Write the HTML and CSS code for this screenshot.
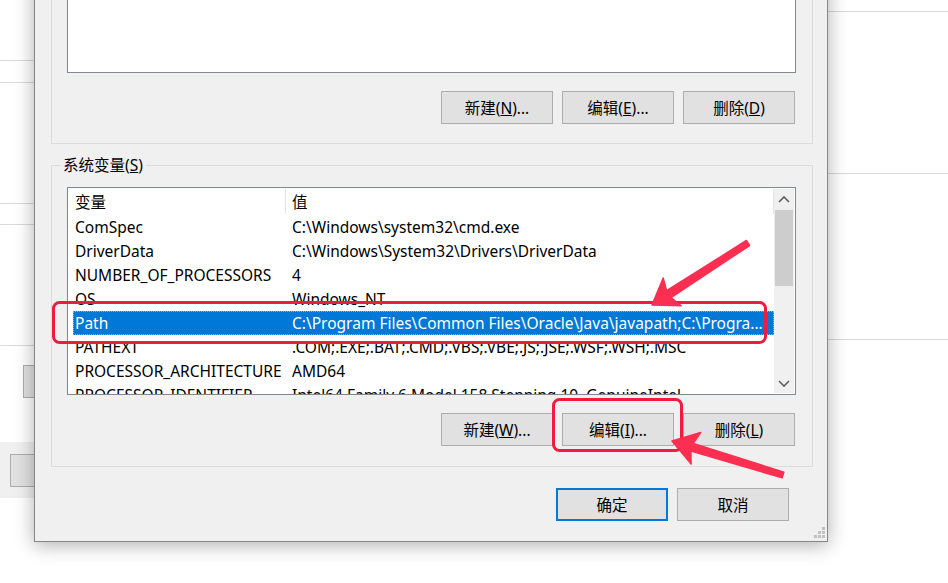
FILE: index.html
```html
<!DOCTYPE html>
<html lang="zh-CN">
<head>
  <meta charset="UTF-8">
  <meta name="viewport" content="width=device-width, initial-scale=1.0">
  <title>环境变量</title>
  <link rel="stylesheet" href="styles.css">
</head>
<body>
  <!-- 背后的窗口 -->
  <div class="bg-left">
    <div class="sep s1"></div>
    <div class="sep s2"></div>
    <div class="sep s3"></div>
    <div class="sep s4"></div>
    <div class="sep s5"></div>
    <div class="bg-btn b1"></div>
    <div class="bg-panel">
      <div class="bg-btn b2"></div>
    </div>
  </div>
  <div class="bg-right">
    <div class="sep r1"></div>
    <div class="sep r2"></div>
    <div class="sep r3"></div>
  </div>

  <!-- 环境变量对话框 -->
  <div class="dialog">
    <div class="group group-user">
      <div class="listbox listbox-user"></div>
      <div class="btn-row">
        <button class="btn">新建(<u>N</u>)...</button>
        <button class="btn">编辑(<u>E</u>)...</button>
        <button class="btn">删除(<u>D</u>)</button>
      </div>
    </div>

    <div class="group group-sys">
      <div class="group-title">系统变量(<u>S</u>)</div>
      <div class="listbox listbox-sys">
        <div class="table">
          <div class="row head">
            <div class="cell name">变量</div>
            <div class="cell value">值</div>
          </div>
          <div class="row"><div class="cell name">ComSpec</div><div class="cell value">C:\Windows\system32\cmd.exe</div></div>
          <div class="row"><div class="cell name">DriverData</div><div class="cell value">C:\Windows\System32\Drivers\DriverData</div></div>
          <div class="row"><div class="cell name">NUMBER_OF_PROCESSORS</div><div class="cell value">4</div></div>
          <div class="row"><div class="cell name">OS</div><div class="cell value">Windows_NT</div></div>
          <div class="row selected"><div class="cell name">Path</div><div class="cell value">C:\Program Files\Common Files\Oracle\Java\javapath;C:\Progra...</div></div>
          <div class="row"><div class="cell name">PATHEXT</div><div class="cell value">.COM;.EXE;.BAT;.CMD;.VBS;.VBE;.JS;.JSE;.WSF;.WSH;.MSC</div></div>
          <div class="row"><div class="cell name">PROCESSOR_ARCHITECTURE</div><div class="cell value">AMD64</div></div>
          <div class="row"><div class="cell name">PROCESSOR_IDENTIFIER</div><div class="cell value">Intel64 Family 6 Model 158 Stepping 10, GenuineIntel</div></div>
        </div>
        <div class="scrollbar">
          <svg class="arrow-up" width="20" height="20" viewBox="0 0 20 20"><polyline points="5,13 10,8 15,13" fill="none" stroke="#606060" stroke-width="1.6"/></svg>
          <div class="thumb"></div>
          <div class="track"></div>
          <svg class="arrow-down" width="20" height="20" viewBox="0 0 20 20"><polyline points="5,8 10,13 15,8" fill="none" stroke="#606060" stroke-width="1.6"/></svg>
        </div>
      </div>
      <div class="btn-row">
        <button class="btn">新建(<u>W</u>)...</button>
        <button class="btn">编辑(<u>I</u>)...</button>
        <button class="btn">删除(<u>L</u>)</button>
      </div>
    </div>

    <div class="footer">
      <button class="btn btn-default">确定</button>
      <button class="btn">取消</button>
    </div>

    <svg class="grip" width="12" height="12" viewBox="0 0 12 12">
      <rect x="9" y="0" width="3" height="3" fill="#c2c2c2"/>
      <rect x="5" y="4" width="3" height="3" fill="#c2c2c2"/>
      <rect x="9" y="4" width="3" height="3" fill="#c2c2c2"/>
      <rect x="1" y="8" width="3" height="3" fill="#c2c2c2"/>
      <rect x="5" y="8" width="3" height="3" fill="#c2c2c2"/>
      <rect x="9" y="8" width="3" height="3" fill="#c2c2c2"/>
    </svg>
  </div>

  <!-- 红色标注 -->
  <svg class="marks" width="948" height="583" viewBox="0 0 948 583">
    <rect x="53.5" y="302.5" width="712" height="40" rx="6" fill="none" stroke="#f01c40" stroke-width="3"/>
    <rect x="553.5" y="399.5" width="128" height="51" rx="6" fill="none" stroke="#f01c40" stroke-width="3"/>
    <polygon points="652,305 681.2,305.8 671,297.5 749.6,245.5 746.4,240.5 666.6,290.7 663.2,278" fill="#fc2f52" stroke="#fc2f52" stroke-width="1.5" stroke-linejoin="round"/>
    <polygon points="672,441 700.7,432.5 693.3,443.4 783.9,472.1 782.1,477.9 690.9,451 691.1,464.1" fill="#fc2f52" stroke="#fc2f52" stroke-width="1.5" stroke-linejoin="round"/>
  </svg>
</body>
</html>
```
FILE: styles.css
```css
body {
  margin: 0;
  width: 948px;
  height: 583px;
  overflow: hidden;
  position: relative;
  background: #fff;
  font-family: "Noto Sans", "Noto Sans CJK SC", sans-serif;
  font-size: 15.5px;
  color: #000;
}

/* 背后的窗口 */
.bg-left {
  position: absolute;
  left: 0;
  top: 0;
  width: 40px;
  height: 583px;
}
.bg-right {
  position: absolute;
  left: 828px;
  top: 0;
  width: 120px;
  height: 583px;
}
.sep {
  height: 1px;
  background: #dadada;
}
.s1 { margin-top: 60px; }
.s2 { margin-top: 21px; }
.s3 { margin-top: 120px; }
.s4 { margin-top: 20px; }
.s5 { margin-top: 120px; }
.r1 { margin-top: 11px; }
.r2 { margin-top: 161px; }
.r3 { margin-top: 165px; }

.bg-btn {
  height: 31px;
  background: #e1e1e1;
  border: 1px solid #adadad;
}
.b1 {
  margin: 19px 0 0 23px;
}
.bg-panel {
  margin-top: 44px;
  height: 44px;
  padding-top: 12px;
  background: #f0f0f0;
}
.b2 {
  margin-left: 10px;
}

/* 对话框 */
.dialog {
  position: absolute;
  left: 34px;
  top: -60px;
  width: 794px;
  height: 602px;
  box-sizing: border-box;
  border: 1px solid #868686;
  background: #f0f0f0;
  box-shadow: 0 3px 18px rgba(0, 0, 0, 0.32);
}

.group {
  width: 762px;
  margin-left: 16px;
  box-sizing: border-box;
  border: 1px solid #dcdcdc;
  padding: 0 0 20px 15px;
}
.group-user {
  margin-top: 18px;
  padding-top: 19px;
  padding-bottom: 19px;
}
.group-sys {
  margin-top: 21px;
}
.group-title {
  width: fit-content;
  margin: -11px 0 0 -7px;
  padding: 0 3px;
  height: 20px;
  line-height: 20px;
  background: #f0f0f0;
}

.listbox {
  width: 729px;
  box-sizing: border-box;
  border: 1px solid #828790;
  background: #fff;
}
.listbox-user {
  height: 94px;
}
.listbox-sys {
  margin-top: 12px;
  height: 208px;
  display: flex;
  overflow: hidden;
}

.table {
  width: 706px;
  padding-left: 5px;
  box-sizing: border-box;
}
.row {
  display: flex;
  height: 24px;
  line-height: 24px;
  white-space: nowrap;
}
.row.head {
  height: 27px;
  line-height: 27px;
}
.cell {
  overflow: hidden;
}
.name {
  width: 219px;
  flex: none;
  padding-left: 2px;
  box-sizing: border-box;
}
.head .name {
  width: 213px;
  border-right: 1px solid #e5e5e5;
  margin: 1px 6px 0 0;
  height: 25px;
  line-height: 26px;
}
.head .value {
  flex: 1;
  border-right: 1px solid #e5e5e5;
  margin-top: 1px;
  height: 25px;
  line-height: 26px;
}
.value {
  flex: 1;
}
.row.selected {
  background: #0078d7;
  color: #fff;
  outline: 1px dotted #f0a040;
  outline-offset: -1px;
}

.scrollbar {
  width: 20px;
  margin: 1px 1px 1px 0;
  background: #f0f0f0;
  display: flex;
  flex-direction: column;
}
.scrollbar svg {
  display: block;
  flex: none;
}
.thumb {
  height: 76px;
  background: #cdcdcd;
  margin: 1px 1px 0 1px;
}
.track {
  flex: 1;
}

.btn-row {
  display: flex;
  justify-content: flex-end;
  gap: 9px;
  width: 728px;
  margin-top: 18px;
}
.btn {
  width: 112px;
  height: 33px;
  padding: 0;
  box-sizing: border-box;
  border: 1px solid #adadad;
  background: #e1e1e1;
  font-family: inherit;
  font-size: 15.5px;
  color: #000;
}
.btn-default {
  border: 2px solid #0078d7;
}

.footer {
  display: flex;
  justify-content: flex-end;
  gap: 9px;
  margin-top: 21px;
  padding-right: 38px;
}

.grip {
  position: absolute;
  right: 2px;
  bottom: 2px;
}

.marks {
  position: absolute;
  left: 0;
  top: 0;
  pointer-events: none;
}
```
